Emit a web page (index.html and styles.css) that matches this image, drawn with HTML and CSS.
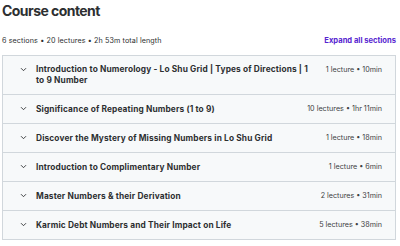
FILE: index.html
```html
<!DOCTYPE html>
<html lang="en">
<head>
    <meta charset="UTF-8">
    <meta name="viewport" content="width=device-width, initial-scale=1.0">
    <title>Course content</title>
    <link rel="stylesheet" href="styles.css">
</head>
<body>
    <div class="curriculum">
        <h2 class="heading">Course content</h2>
        <div class="summary">
            <span class="stats">6 sections • 20 lectures • 2h 53m total length</span>
            <button class="expand">Expand all sections</button>
        </div>
        <div class="sections">
            <div class="section">
                <span class="chevron"><svg width="7" height="5" viewBox="0 0 7 5"><path d="M1 1.2l2.5 2.5 2.5-2.5" fill="none" stroke="#2d2f31" stroke-width="0.9"/></svg></span>
                <span class="name">Introduction to Numerology - Lo Shu Grid | Types of Directions | 1 to 9 Number</span>
                <span class="meta">1 lecture • 10min</span>
            </div>
            <div class="section">
                <span class="chevron"><svg width="7" height="5" viewBox="0 0 7 5"><path d="M1 1.2l2.5 2.5 2.5-2.5" fill="none" stroke="#2d2f31" stroke-width="0.9"/></svg></span>
                <span class="name">Significance of Repeating Numbers (1 to 9)</span>
                <span class="meta">10 lectures • 1hr 11min</span>
            </div>
            <div class="section">
                <span class="chevron"><svg width="7" height="5" viewBox="0 0 7 5"><path d="M1 1.2l2.5 2.5 2.5-2.5" fill="none" stroke="#2d2f31" stroke-width="0.9"/></svg></span>
                <span class="name">Discover the Mystery of Missing Numbers in Lo Shu Grid</span>
                <span class="meta">1 lecture • 18min</span>
            </div>
            <div class="section">
                <span class="chevron"><svg width="7" height="5" viewBox="0 0 7 5"><path d="M1 1.2l2.5 2.5 2.5-2.5" fill="none" stroke="#2d2f31" stroke-width="0.9"/></svg></span>
                <span class="name">Introduction to Complimentary Number</span>
                <span class="meta">1 lecture • 6min</span>
            </div>
            <div class="section">
                <span class="chevron"><svg width="7" height="5" viewBox="0 0 7 5"><path d="M1 1.2l2.5 2.5 2.5-2.5" fill="none" stroke="#2d2f31" stroke-width="0.9"/></svg></span>
                <span class="name">Master Numbers &amp; their Derivation</span>
                <span class="meta">2 lectures • 31min</span>
            </div>
            <div class="section">
                <span class="chevron"><svg width="7" height="5" viewBox="0 0 7 5"><path d="M1 1.2l2.5 2.5 2.5-2.5" fill="none" stroke="#2d2f31" stroke-width="0.9"/></svg></span>
                <span class="name">Karmic Debt Numbers and Their Impact on Life</span>
                <span class="meta">5 lectures • 38min</span>
            </div>
        </div>
    </div>
</body>
</html>
```

FILE: styles.css
```css
body{
    margin: 0;
    padding: 0;
    background-color: #ffffff;
    color: #2d2f31;
    font-family: "Inter", "Liberation Sans", sans-serif;
}
.curriculum{
    padding: 0 4px 0 2px;
}
.heading{
    margin: 0;
    padding-top: 2px;
    font-size: 14px;
    line-height: 18px;
    font-weight: 700;
    letter-spacing: -0.55px;
}
.summary{
    display: flex;
    justify-content: space-between;
    align-items: center;
    margin-top: 14px;
    height: 12px;
    margin-bottom: 9px;
}
.stats{
    font-size: 7.2px;
    letter-spacing: 0.1px;
    color: #2d2f31;
}
.expand{
    border: none;
    background: none;
    padding: 0;
    font-family: inherit;
    font-size: 7.6px;
    font-weight: 700;
    color: #5624d0;
}
.sections{
    border: 1px solid #d1d7dc;
}
.section{
    display: flex;
    align-items: center;
    background-color: #f7f9fa;
    border-bottom: 1px solid #d1d7dc;
    padding: 8px 13px 8px 17px;
    min-height: 12px;
}
.section:last-child{
    border-bottom: none;
}
.chevron{
    display: flex;
    width: 7px;
    margin-right: 9px;
    flex-shrink: 0;
    align-self: flex-start;
    padding-top: 3px;
}
.name{
    flex: 1;
    font-size: 8.3px;
    line-height: 11px;
    font-weight: 700;
    letter-spacing: 0.15px;
    margin-right: 8px;
}
.meta{
    font-size: 7.2px;
    color: #3e4143;
    white-space: nowrap;
    align-self: flex-start;
    line-height: 11px;
}
```
